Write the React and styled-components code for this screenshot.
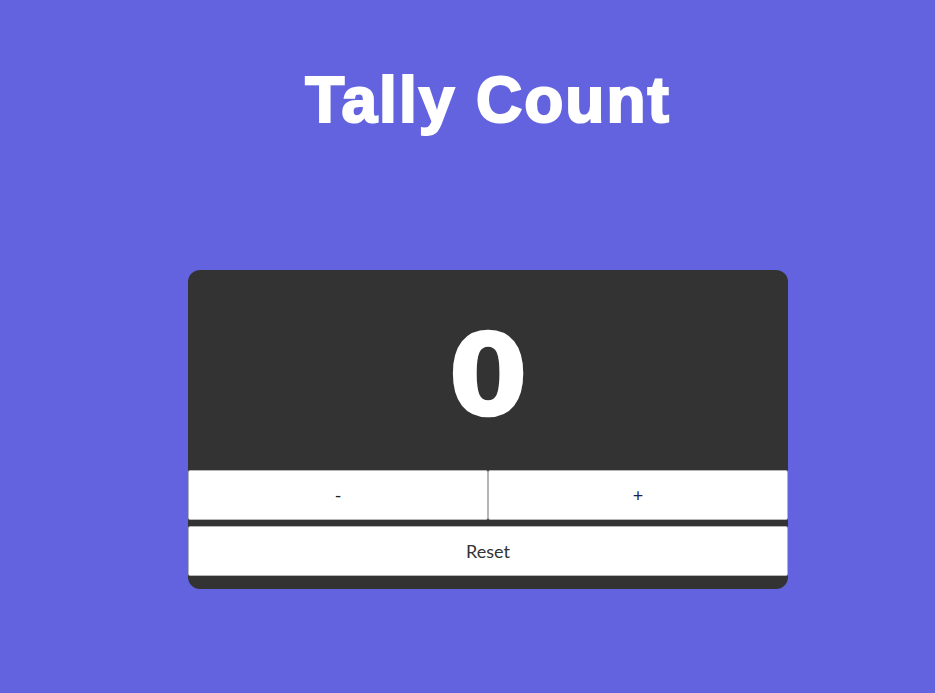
import React, { useState } from "react";
import styled, { createGlobalStyle } from "styled-components";

const Global = createGlobalStyle`
  html, body { margin: 0; padding: 0; }
  body { background: #6363df; font-family: "Lato", "Liberation Sans", sans-serif; }
`;

const Page = styled.main`
  min-height: 693px;
  box-sizing: border-box;
  display: flex;
  flex-direction: column;
  align-items: center;
  padding: 62px 0 0 41px;
`;

const Title = styled.h1`
  margin: 0;
  font-family: "Liberation Sans", Arial, sans-serif;
  font-weight: 700;
  font-size: 64px;
  line-height: 76px;
  letter-spacing: 2px;
  color: #fff;
  -webkit-text-stroke: 2.2px #fff;
`;

const Card = styled.section`
  margin-top: 132px;
  width: 600px;
  background: #333333;
  border-radius: 12px;
  padding-bottom: 13px;
  overflow: hidden;
`;

const Display = styled.div`
  height: 200px;
  box-sizing: border-box;
  padding-top: 9px;
  display: flex;
  align-items: center;
  justify-content: center;
  font-family: "DejaVu Sans", "Liberation Sans", sans-serif;
  font-weight: 700;
  font-size: 113px;
  color: #fff;
  -webkit-text-stroke: 2.5px #fff;
`;

const Row = styled.div`
  display: grid;
  grid-template-columns: 1fr 1fr;
  margin-bottom: 6px;
`;

const Button = styled.button`
  height: 50px;
  width: 100%;
  box-sizing: border-box;
  background: #fff;
  border: 1px solid #b5b5b8;
  border-radius: 2px;
  font-family: "Lato", "Liberation Sans", sans-serif;
  font-size: 18px;
  color: ${(p) => p.$color || "#333"};
  cursor: pointer;
  display: block;
`;

export default function App() {
  const [count, setCount] = useState(0);
  return (
    <>
      <Global />
      <Page>
        <Title>Tally Count</Title>
        <Card>
          <Display>{count}</Display>
          <Row>
            <Button $color="#222" onClick={() => setCount((c) => c - 1)}>-</Button>
            <Button $color="#1e1e4e" onClick={() => setCount((c) => c + 1)}>+</Button>
          </Row>
          <Button onClick={() => setCount(0)}>Reset</Button>
        </Card>
      </Page>
    </>
  );
}
